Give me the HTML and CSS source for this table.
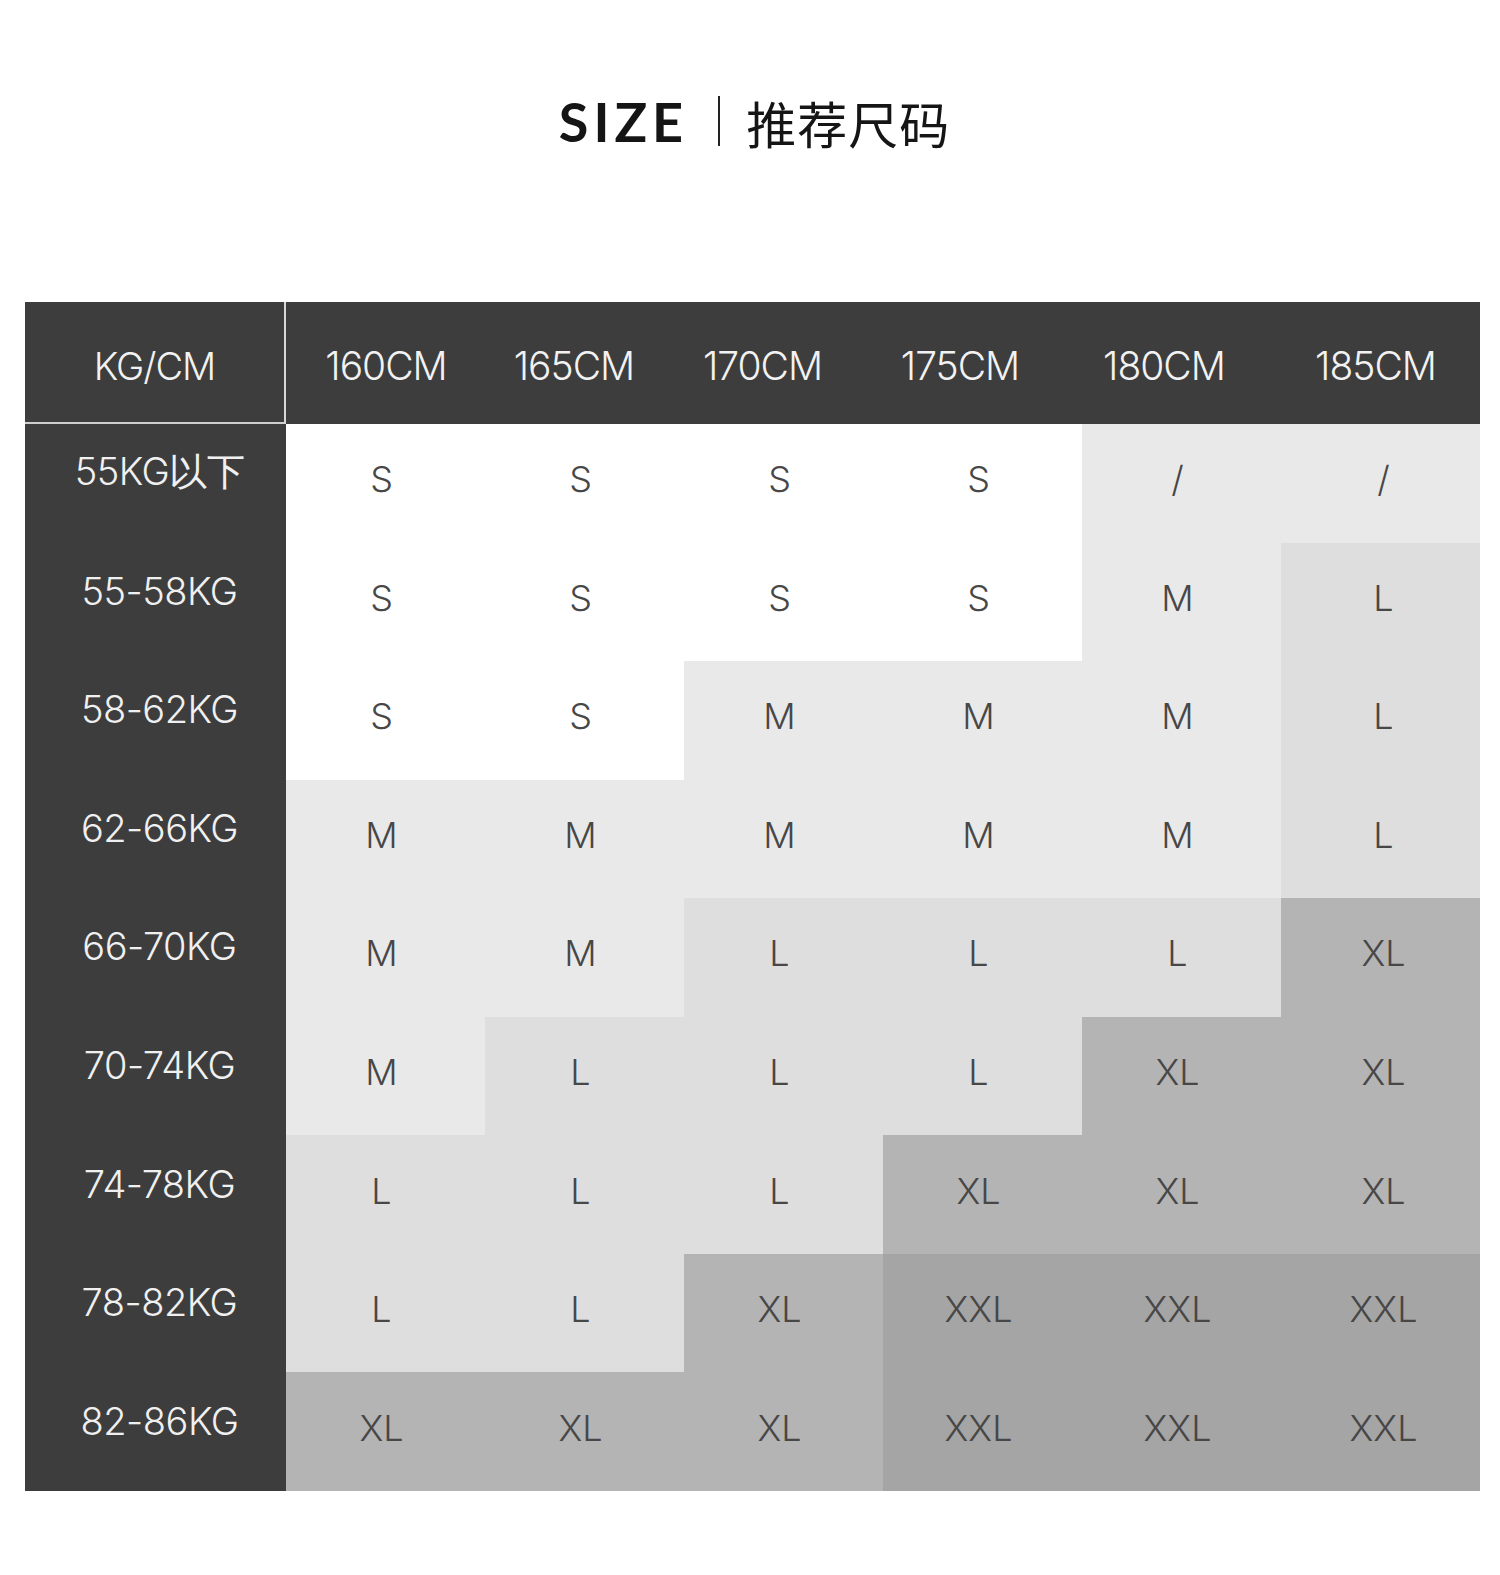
FILE: index.html
```html
<!DOCTYPE html>
<html lang="zh">
<head>
<meta charset="utf-8">
<title>SIZE 推荐尺码</title>
<link rel="stylesheet" href="styles.css">
</head>
<body>
<div class="page">
  <header class="title">
    <span class="title-en">SIZE</span>
    <span class="title-sep"></span>
    <span class="title-cn">推荐尺码</span>
  </header>

  <section class="chart">
    <div class="head">
      <div class="head-corner">KG/CM</div>
      <div class="head-cell">160CM</div>
      <div class="head-cell">165CM</div>
      <div class="head-cell">170CM</div>
      <div class="head-cell">175CM</div>
      <div class="head-cell">180CM</div>
      <div class="head-cell">185CM</div>
    </div>
    <div class="body">
      <div class="label">55KG以下</div>
      <div class="c s">S</div><div class="c s">S</div><div class="c s">S</div><div class="c s">S</div><div class="c m">/</div><div class="c m last">/</div>

      <div class="label">55-58KG</div>
      <div class="c s">S</div><div class="c s">S</div><div class="c s">S</div><div class="c s">S</div><div class="c m">M</div><div class="c l last">L</div>

      <div class="label">58-62KG</div>
      <div class="c s">S</div><div class="c s">S</div><div class="c m">M</div><div class="c m">M</div><div class="c m">M</div><div class="c l last">L</div>

      <div class="label">62-66KG</div>
      <div class="c m">M</div><div class="c m">M</div><div class="c m">M</div><div class="c m">M</div><div class="c m">M</div><div class="c l last">L</div>

      <div class="label">66-70KG</div>
      <div class="c m">M</div><div class="c m">M</div><div class="c l">L</div><div class="c l">L</div><div class="c l">L</div><div class="c xl last">XL</div>

      <div class="label">70-74KG</div>
      <div class="c m">M</div><div class="c l">L</div><div class="c l">L</div><div class="c l">L</div><div class="c xl">XL</div><div class="c xl last">XL</div>

      <div class="label">74-78KG</div>
      <div class="c l">L</div><div class="c l">L</div><div class="c l">L</div><div class="c xl">XL</div><div class="c xl">XL</div><div class="c xl last">XL</div>

      <div class="label">78-82KG</div>
      <div class="c l">L</div><div class="c l">L</div><div class="c xl">XL</div><div class="c xxl">XXL</div><div class="c xxl">XXL</div><div class="c xxl last">XXL</div>

      <div class="label">82-86KG</div>
      <div class="c xl">XL</div><div class="c xl">XL</div><div class="c xl">XL</div><div class="c xxl">XXL</div><div class="c xxl">XXL</div><div class="c xxl last">XXL</div>
    </div>
  </section>
</div>
</body>
</html>
```

FILE: styles.css
```css
html, body {
  margin: 0;
  padding: 0;
  background: #ffffff;
}

.page {
  width: 1500px;
  padding: 0 20px 0 25px;
  box-sizing: border-box;
}

.title {
  height: 302px;
  display: flex;
  align-items: flex-start;
  justify-content: center;
  padding-top: 94px;
  padding-left: 4px;
  box-sizing: border-box;
  color: #151515;
}

.title-en {
  font-family: "Lato", "Liberation Sans", sans-serif;
  font-weight: 700;
  font-size: 54px;
  line-height: 56px;
  letter-spacing: 5px;
}

.title-sep {
  width: 2px;
  height: 50px;
  background: #222;
  margin: 2px 26px 0 30px;
}

.title-cn {
  font-family: "Noto Sans CJK SC", sans-serif;
  font-weight: 400;
  font-size: 50px;
  line-height: 56px;
  letter-spacing: 1px;
}

.chart {
  width: 1455px;
  font-family: "Inter", "Liberation Sans", sans-serif;
  font-weight: 300;
}

.head {
  display: grid;
  grid-template-columns: 261px 192px 184px 193px 202px 206px 217px;
  height: 122px;
  background: #3d3d3d;
  color: #f2f2f2;
}

.head-corner {
  display: flex;
  align-items: center;
  justify-content: center;
  font-size: 38px;
  border-right: 2px solid #d8d8d8;
  border-bottom: 2px solid #cfcfcf;
  padding-top: 8px;
  box-sizing: border-box;
  letter-spacing: -1px;
}

.head-cell {
  display: flex;
  align-items: center;
  justify-content: center;
  font-size: 39px;
  letter-spacing: -1px;
  padding: 4px 0 0 8px;
  box-sizing: border-box;
}

.body {
  display: grid;
  grid-template-columns: 261px repeat(6, 1fr);
  grid-auto-rows: 118.56px;
}

.label {
  background: #3d3d3d;
  color: #f0f0f0;
  display: flex;
  align-items: center;
  justify-content: center;
  font-size: 38px;
  letter-spacing: -0.5px;
  padding: 0 0 22px 8px;
  box-sizing: border-box;
}

.c {
  display: flex;
  align-items: center;
  justify-content: center;
  font-size: 36px;
  color: #474747;
  padding: 0 8px 8px 0;
  box-sizing: border-box;
}

.c.last {
  padding: 0 0 8px 6px;
}

.s { background: #ffffff; }
.m { background: #e9e9e9; }
.l { background: #dedede; }
.xl { background: #b4b4b4; }
.xxl { background: #a5a5a5; }
```
